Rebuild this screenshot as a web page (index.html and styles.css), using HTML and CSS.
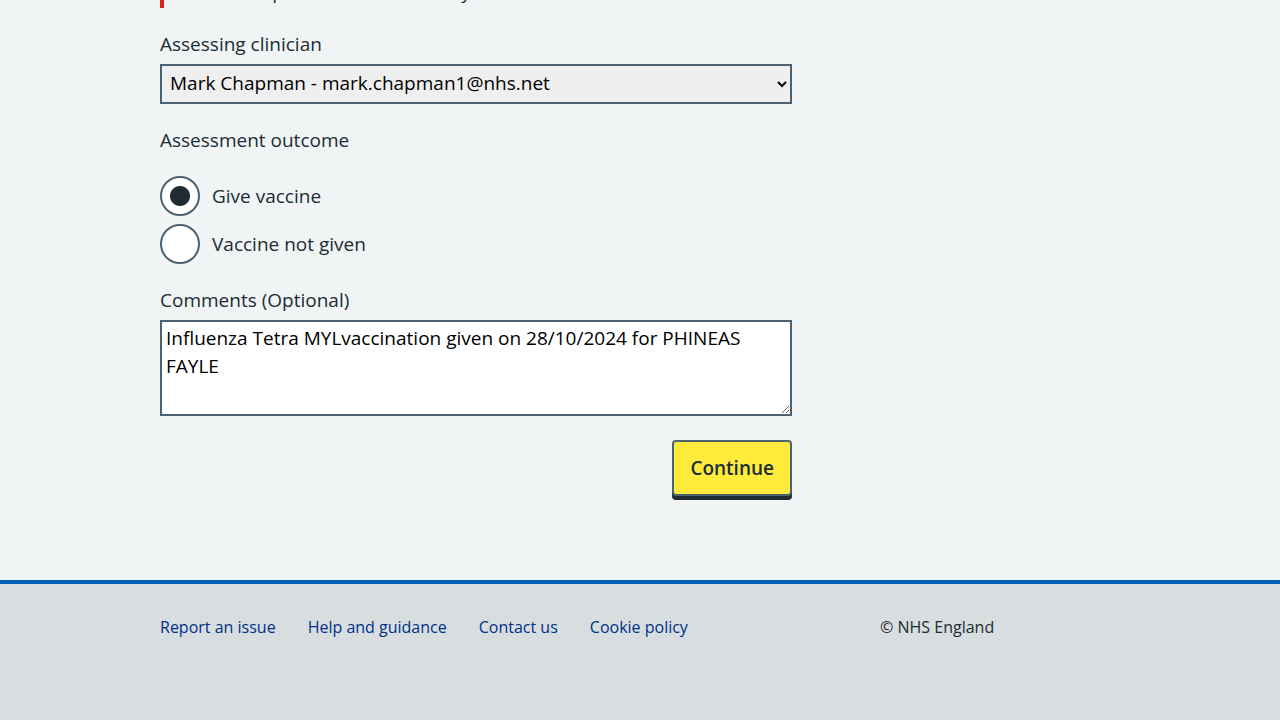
FILE: index.html
```html
<!DOCTYPE html>
<html lang="en">
<head>
<meta charset="utf-8">
<title>Assessment</title>
<link rel="stylesheet" href="styles.css">
</head>
<body>
<main class="main">
  <div class="container">
    <div class="column">
      <div class="error-block">Check the patient is fit and ready to be vaccinated</div>

      <div class="form-group">
        <label class="label" for="clinician">Assessing clinician</label>
        <select class="select" id="clinician">
          <option>Mark Chapman - mark.chapman1@nhs.net</option>
        </select>
      </div>

      <fieldset class="form-group fieldset">
        <legend class="legend">Assessment outcome</legend>
        <div class="radios">
          <div class="radio-item">
            <input class="radio-input" type="radio" name="outcome" id="give" checked>
            <label class="radio-label" for="give">Give vaccine</label>
          </div>
          <div class="radio-item">
            <input class="radio-input" type="radio" name="outcome" id="notgiven">
            <label class="radio-label" for="notgiven">Vaccine not given</label>
          </div>
        </div>
      </fieldset>

      <div class="form-group">
        <label class="label" for="comments">Comments (Optional)</label>
        <textarea class="textarea" id="comments" rows="3">Influenza Tetra MYLvaccination given on 28/10/2024 for PHINEAS FAYLE</textarea>
      </div>

      <div class="actions">
        <button class="button" type="button">Continue</button>
      </div>
    </div>
  </div>
</main>
<footer class="footer">
  <div class="container footer-row">
    <ul class="footer-links">
      <li><a href="#">Report an issue</a></li>
      <li><a href="#">Help and guidance</a></li>
      <li><a href="#">Contact us</a></li>
      <li><a href="#">Cookie policy</a></li>
    </ul>
    <p class="copyright">© NHS England</p>
  </div>
</footer>
</body>
</html>
```

FILE: styles.css
```css
* { box-sizing: border-box; }
html, body { margin: 0; padding: 0; }
body {
  background: #f0f4f5;
  color: #212b32;
  font-family: "Open Sans", "Liberation Sans", sans-serif;
  font-size: 19px;
  line-height: 28px;
}
.container {
  width: 960px;
  margin: 0 auto;
}
.main {
  padding-bottom: 84px;
}
.column {
  width: 632px;
}
.error-block {
  margin-top: -22px;
  margin-bottom: 24px;
  border-left: 4px solid #d5281b;
  padding: 0 0 2px 16px;
  line-height: 28px;
}
.form-group {
  margin: 0 0 24px;
}
.fieldset {
  border: 0;
  padding: 0;
  min-width: 0;
}
.label, .legend {
  display: block;
  margin-bottom: 4px;
  padding: 0;
}
.label { position: relative; top: -2px; }
.legend {
  margin-bottom: 20px;
  position: relative;
  top: -2px;
}
.select {
  display: block;
  width: 632px;
  height: 40px;
  border: 2px solid #4c6272;
  border-radius: 0;
  background-color: #efefef;
  color: #000;
  font: inherit;
  padding: 0 4px 3px;
}
.radios {
  display: flex;
  flex-direction: column;
  gap: 8px;
}
.radio-item {
  display: flex;
  align-items: center;
  gap: 12px;
  min-height: 40px;
}
.radio-input {
  appearance: none;
  -webkit-appearance: none;
  margin: 0;
  width: 40px;
  height: 40px;
  border: 2px solid #4c6272;
  border-radius: 50%;
  background: #fff;
  flex: none;
}
.radio-input:checked {
  background: radial-gradient(circle, #212b32 0 9.5px, #fff 10.5px);
}
.textarea {
  display: block;
  width: 632px;
  height: 96px;
  border: 2px solid #4c6272;
  border-radius: 0;
  padding: 2px 4px 6px;
  font: inherit;
  color: #000;
  background: #fff;
  resize: vertical;
}
.actions {
  display: flex;
  justify-content: flex-end;
}
.button {
  font: inherit;
  font-weight: 600;
  color: #212b32;
  background: #ffeb3b;
  border: 2px solid #4c6272;
  border-radius: 4px;
  padding: 12px 16px;
  line-height: 28px;
  box-shadow: 0 4px 0 #212b32;
  cursor: pointer;
}
.footer {
  background: #d8dde0;
  border-top: 4px solid #005eb8;
  padding: 31px 0 100px;
  font-size: 16px;
  line-height: 24px;
}
.footer-row {
  display: flex;
}
.footer-links {
  list-style: none;
  margin: 0;
  padding: 0;
  width: 720px;
  display: flex;
  gap: 32px;
}
.footer-links a {
  color: #003087;
  text-decoration: none;
}
.copyright {
  margin: 0;
  color: #212b32;
}
```
